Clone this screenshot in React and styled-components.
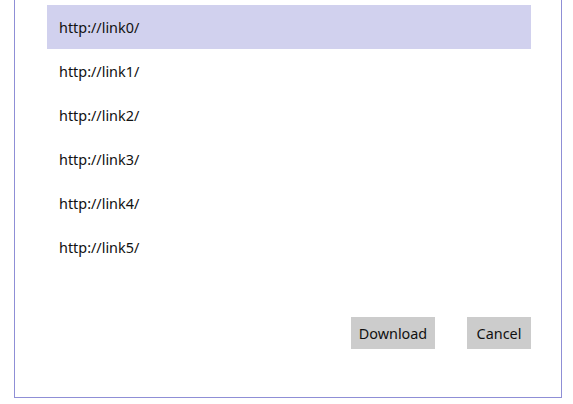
import React, { useState } from 'react';
import styled, { createGlobalStyle } from 'styled-components';

const GlobalStyle = createGlobalStyle`
  html, body {
    margin: 0;
    padding: 0;
    background: #ffffff;
  }
  body {
    font-family: 'Noto Sans', 'Open Sans', sans-serif;
    color: #111111;
  }
`;

const Page = styled.div`
  width: 573px;
  height: 404px;
  padding: 0 11px 6px 14px;
  box-sizing: border-box;
  display: flex;
`;

const Dialog = styled.div`
  flex: 1;
  border: 1px solid #8f8fd6;
  border-top: none;
  padding: 5px 30px 48px 32px;
  display: flex;
  flex-direction: column;
`;

const LinkList = styled.ul`
  list-style: none;
  margin: 0;
  padding: 0;
  flex: 1;
`;

const LinkRow = styled.li`
  height: 44px;
  display: flex;
  align-items: center;
  padding-left: 12px;
  font-size: 14.4px;
  background: ${(p) => (p.$selected ? '#d1d1ee' : 'transparent')};
  cursor: default;
`;

const Actions = styled.div`
  display: flex;
  justify-content: flex-end;
  gap: 32px;
`;

const Button = styled.button`
  height: 32px;
  width: ${(p) => p.$width}px;
  padding: 0;
  border: none;
  background: #cccccc;
  color: #111111;
  font-family: inherit;
  font-size: 14.4px;
`;

const links = [0, 1, 2, 3, 4, 5].map((i) => `http://link${i}/`);

export default function App() {
  const [selected, setSelected] = useState(0);

  return (
    <>
      <GlobalStyle />
      <Page>
        <Dialog>
          <LinkList>
            {links.map((link, i) => (
              <LinkRow key={link} $selected={i === selected} onClick={() => setSelected(i)}>
                {link}
              </LinkRow>
            ))}
          </LinkList>
          <Actions>
            <Button $width={84}>Download</Button>
            <Button $width={64}>Cancel</Button>
          </Actions>
        </Dialog>
      </Page>
    </>
  );
}
